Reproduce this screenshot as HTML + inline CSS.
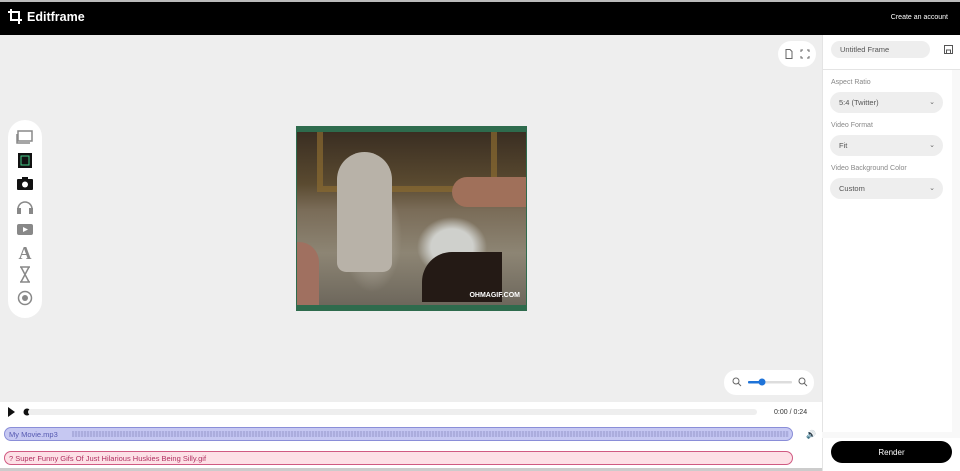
<!DOCTYPE html>
<html><head><meta charset="utf-8"><style>
*{box-sizing:border-box;margin:0;padding:0}
body{width:960px;height:471px;overflow:hidden;background:#eee;font-family:"Liberation Sans",sans-serif;position:relative}
.abs{position:absolute}
.hdr{left:0;top:0;width:960px;height:35px;background:#000;border-top:2px solid #bbb}
.logo{left:27px;top:10px;color:#fff;font-weight:bold;font-size:12.5px}
.acct{right:12px;top:14px;color:#fff;font-size:7px}
.right{left:822px;top:35px;width:138px;height:436px;background:#fff;border-left:1px solid #e4e4e4}
.pill{background:#eee;border-radius:12px;font-size:7.5px;color:#555;padding-left:9px;display:flex;align-items:center;line-height:1}
.lbl{font-size:7px;color:#888}
.chev{position:absolute;right:8px;font-size:7px;color:#666}
.side{left:8px;top:120px;width:34px;height:198px;background:#fff;border-radius:17px}
.vid{left:296px;top:126px;width:231px;height:185px;background:#2e6b4d}
.img{left:297px;top:132px;width:229px;height:173px;background:
radial-gradient(ellipse 30px 55px at 75px 105px,#b9b3a8,transparent),
radial-gradient(ellipse 35px 30px at 155px 115px,#cfd0cc 60%,transparent),
linear-gradient(#3a2e22 0,#5a4a30 30%,#7a6c58 45%,#8d8574 70%,#6d675c 100%)}
.tl{left:0;top:402px;width:822px;height:69px;background:#fff}
</style></head><body>
<div class="abs hdr"></div>
<svg class="abs" style="left:8px;top:9px" width="15" height="15" viewBox="0 0 15 15" fill="none" stroke="#fff" stroke-width="2"><path d="M3 0v11h11M0 3h11v12"/></svg>
<div class="abs logo">Editframe</div>
<div class="abs acct">Create an account</div>

<div class="abs side"></div>
<svg class="abs" style="left:16px;top:128px" width="18" height="180" viewBox="0 0 18 180">
<rect x="2" y="3" width="14" height="10" fill="none" stroke="#888" stroke-width="1.5"/><path d="M1 6v9h13" stroke="#888" fill="none" stroke-width="1.5"/>
<rect x="2" y="25" width="14" height="15" fill="#111"/><rect x="5" y="28" width="8" height="9" fill="none" stroke="#4c8" stroke-width="1"/>
<rect x="1" y="51" width="16" height="11" rx="1" fill="#111"/><rect x="6" y="49" width="6" height="3" fill="#111"/><circle cx="9" cy="56.5" r="3" fill="#fff"/>
<path d="M2 84v-3a7 7 0 0 1 14 0v3" stroke="#888" stroke-width="1.5" fill="none"/><rect x="1" y="80" width="4" height="6" fill="#888"/><rect x="13" y="80" width="4" height="6" fill="#888"/>
<rect x="1" y="96" width="16" height="11" rx="2" fill="#888"/><path d="M7 99l5 2.5-5 2.5z" fill="#fff"/>
<text x="9" y="131" text-anchor="middle" font-size="18" font-weight="bold" fill="#888" font-family="Liberation Serif">A</text>
<path d="M4 139h10M4 154h10M5 139l4 7.5-4 7.5M13 139l-4 7.5 4 7.5" stroke="#888" stroke-width="1.5" fill="none"/>
<circle cx="9" cy="170" r="6.5" stroke="#888" stroke-width="1.5" fill="none"/><circle cx="9" cy="170" r="3" fill="#888"/>
</svg>

<div class="abs" style="left:778px;top:41px;width:38px;height:26px;background:#fff;border-radius:13px"></div>
<svg class="abs" style="left:785px;top:49px" width="25" height="10" viewBox="0 0 25 10" fill="none" stroke="#666" stroke-width="1"><path d="M1 0.5h4l2 2v7H1z"/><path d="M16 3V1h2M22 1h2v2M24 7v2h-2M18 9h-2V7"/></svg>

<div class="abs vid"></div>
<div class="abs img"></div>
<div class="abs" style="left:297px;top:132px;width:229px;height:173px;overflow:hidden">
<div class="abs" style="left:20px;top:0;width:180px;height:60px;border:6px solid #8a6a30;border-top:none;opacity:.7"></div>
<div class="abs" style="left:40px;top:20px;width:55px;height:120px;background:#b8b2a8;border-radius:30px 30px 10px 10px"></div>
<div class="abs" style="left:155px;top:45px;width:74px;height:30px;background:#a0705a;border-radius:15px 0 0 15px"></div>
<div class="abs" style="left:125px;top:120px;width:80px;height:50px;background:#241a15;border-radius:30px 0 0 0"></div>
<div class="abs" style="left:0;top:110px;width:22px;height:63px;background:#a07060;border-radius:0 20px 0 0"></div>
<div class="abs" style="right:6px;bottom:6px;color:#fff;font-size:7px;font-weight:bold">OHMAGIF.COM</div>
</div>

<div class="abs" style="left:724px;top:370px;width:90px;height:25px;background:#fff;border-radius:12px"></div>
<svg class="abs" style="left:732px;top:377px" width="76" height="10" viewBox="0 0 76 10"><circle cx="4" cy="4" r="3" fill="none" stroke="#666"/><path d="M6 6l3 3" stroke="#666"/><rect x="16" y="4" width="44" height="2.5" rx="1" fill="#ddd"/><rect x="16" y="4" width="14" height="2.5" rx="1" fill="#1e73d8"/><circle cx="30" cy="5" r="3.5" fill="#1e73d8"/><circle cx="70" cy="4" r="3" fill="none" stroke="#666"/><path d="M72 6l3 3" stroke="#666"/></svg>

<div class="abs tl"></div>
<svg class="abs" style="left:7px;top:407px" width="25" height="10"><path d="M1 0l7 5-7 5z" fill="#111"/><circle cx="20" cy="5" r="3.5" fill="#111"/></svg>
<div class="abs" style="left:28px;top:409px;width:729px;height:6px;background:#eee;border-radius:3px"></div>
<div class="abs" style="left:774px;top:409px;font-size:7px;color:#333">0:00 / 0:24</div>
<div class="abs" style="left:4px;top:427px;width:789px;height:14px;background:#c6c8f2;border:1px solid #8a8ed8;border-radius:7px"></div>
<div class="abs" style="left:72px;top:431px;width:717px;height:6px;background:repeating-linear-gradient(90deg,#a4a6d8 0 2px,#bcbeee 2px 3px);opacity:.8"></div>
<div class="abs" style="left:9px;top:430px;font-size:7.5px;color:#5558b0">My Movie.mp3</div>
<div class="abs" style="left:806px;top:430px;font-size:8px;color:#333">🔊</div>
<div class="abs" style="left:4px;top:451px;width:789px;height:14px;background:#fde0e6;border:1px solid #d05a82;border-radius:7px"></div>
<div class="abs" style="left:9px;top:454px;font-size:7.5px;color:#b03060">? Super Funny Gifs Of Just Hilarious Huskies Being Silly.gif</div>
<div class="abs" style="left:0;top:468px;width:960px;height:3px;background:#ccc"></div>

<div class="abs right"></div>
<div class="abs pill" style="left:831px;top:41px;width:99px;height:17px">Untitled Frame</div>
<svg class="abs" style="left:944px;top:45px" width="9" height="9" viewBox="0 0 9 9" fill="none" stroke="#555"><rect x=".5" y=".5" width="8" height="8"/><rect x="2.5" y="5" width="4" height="3.5"/></svg>
<div class="abs" style="left:822px;top:69px;width:138px;height:1px;background:#e4e4e4"></div>
<div class="abs" style="left:952px;top:70px;width:8px;height:362px;background:#f8f8f8"></div>
<div class="abs lbl" style="left:831px;top:79px">Aspect Ratio</div>
<div class="abs pill" style="left:830px;top:92px;width:113px;height:21px">5:4 (Twitter)<span class="chev">⌄</span></div>
<div class="abs lbl" style="left:831px;top:122px">Video Format</div>
<div class="abs pill" style="left:830px;top:135px;width:113px;height:21px">Fit<span class="chev">⌄</span></div>
<div class="abs lbl" style="left:831px;top:165px">Video Background Color</div>
<div class="abs pill" style="left:830px;top:178px;width:113px;height:21px">Custom<span class="chev">⌄</span></div>
<div class="abs" style="left:822px;top:432px;width:138px;height:6px;background:#f8f8f8"></div>
<div class="abs" style="left:831px;top:441px;width:121px;height:22px;background:#000;border-radius:11px;color:#fff;font-size:8px;display:flex;align-items:center;justify-content:center">Render</div>
</body></html>
